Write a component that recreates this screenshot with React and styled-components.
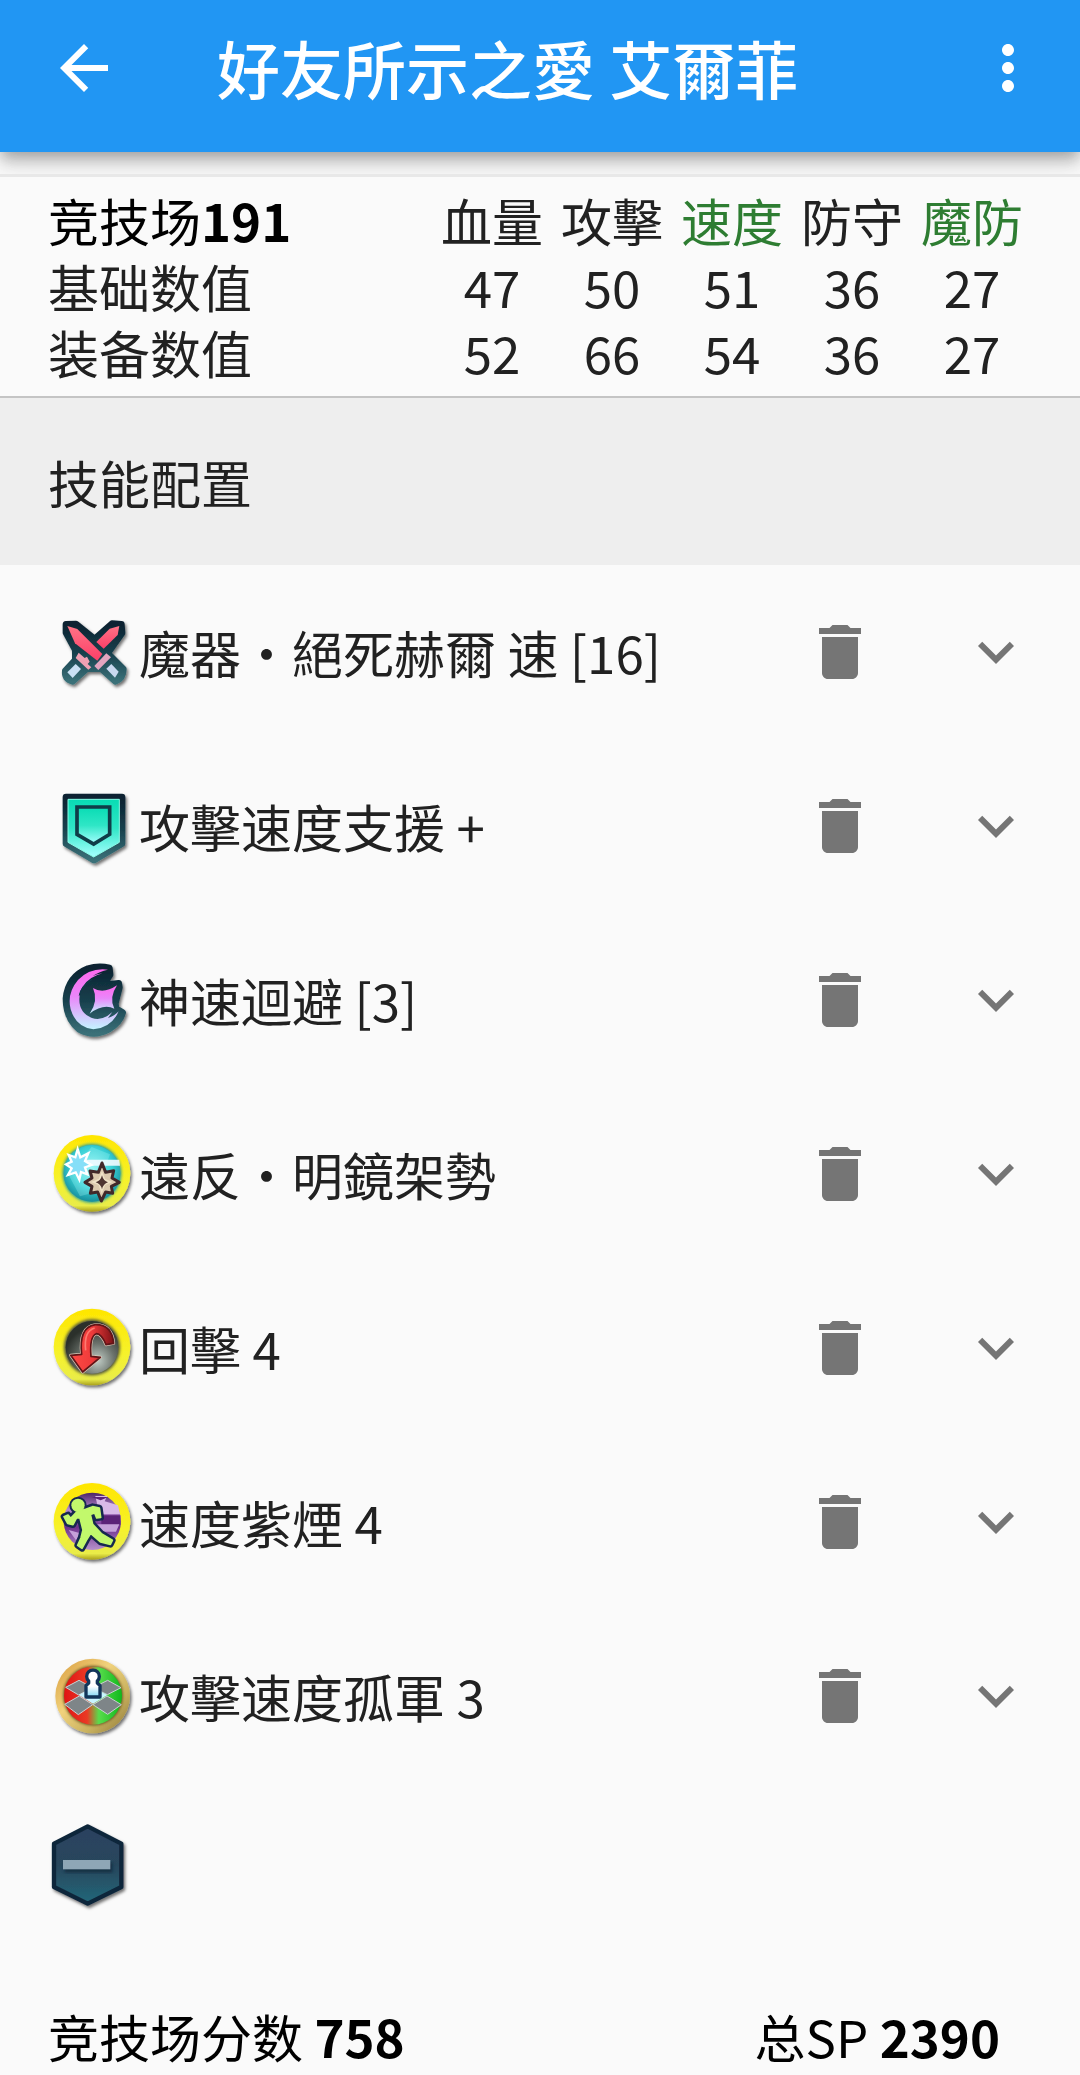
import React, { useState } from 'react';
import styled, { createGlobalStyle } from 'styled-components';
import {
  MdArrowBack,
  MdDelete,
  MdExpandMore,
  MdMoreVert,
} from 'react-icons/md';

const GlobalStyle = createGlobalStyle`
  * {
    box-sizing: border-box;
  }

  body {
    margin: 0;
    background: #fafafa;
    color: #212121;
    font-family: 'Noto Sans CJK SC', 'Noto Sans CJK TC', sans-serif;
    font-size: 51px;
    line-height: 66px;
  }
`;

const Page = styled.div`
  min-height: 100vh;
  overflow: hidden;
`;

const AppBar = styled.header`
  display: flex;
  align-items: center;
  height: 152px;
  padding: 0 36px 16px 48px;
  background: #2196f3;
  color: #fff;
  box-shadow: 0 6px 12px -3px rgba(0, 0, 0, 0.2),
    0 12px 15px rgba(0, 0, 0, 0.14), 0 3px 30px rgba(0, 0, 0, 0.12);
`;

const IconButton = styled.button`
  display: flex;
  flex: none;
  align-items: center;
  justify-content: center;
  width: ${props => props.$width || 72}px;
  height: 72px;
  padding: 0;
  border: 0;
  background: none;
  color: ${props => props.$color || '#757575'};
  font-size: 72px;
  line-height: 1;
  cursor: pointer;
`;

const Title = styled.h1`
  flex: 1;
  margin: 0;
  padding: 0 0 2px 97px;
  font-size: 63px;
  font-weight: 500;
  line-height: 88px;
  white-space: nowrap;
`;

const StatsPanel = styled.section`
  position: relative;
  margin-top: 22px;
  padding: 10px 48px 11px;
  border-top: 3px solid #e8e8e8;
  border-bottom: 2px solid #c4c4c4;
  background: #fafafa;
`;

const StatsTable = styled.table`
  width: 100%;
  border-collapse: collapse;
  table-layout: fixed;

  & th,
  & td {
    width: 120px;
    padding: 0;
    font-weight: 400;
    text-align: center;
    white-space: nowrap;
  }

  & th:first-child {
    width: auto;
    text-align: left;
  }
`;

const StatName = styled.span`
  color: ${props => (props.$boost ? '#2e7d32' : 'inherit')};
`;

const Score = styled.span`
  color: #000;
`;

const SectionTitle = styled.h2`
  margin: 0;
  padding: 51px 48px 50px;
  background: #eee;
  font-size: 51px;
  font-weight: 400;
`;

const SkillList = styled.ul`
  margin: 0;
  padding: 0;
  list-style: none;
`;

const SkillRow = styled.li`
  display: flex;
  align-items: center;
  height: 174px;
  padding: 0 48px;
`;

const SkillIcon = styled.svg`
  display: block;
  flex: none;
  width: 90px;
  height: 90px;
  overflow: visible;
`;

const SkillName = styled.span`
  flex: 1;
  min-width: 0;
  padding-left: 1px;
  white-space: nowrap;
`;

const Actions = styled.div`
  display: flex;
  align-items: center;
  gap: 48px;
`;

const EmptySlot = styled.button`
  display: block;
  margin: 38px 48px 0;
  padding: 0;
  border: 0;
  background: none;
  cursor: pointer;
`;

const Summary = styled.footer`
  display: flex;
  justify-content: space-between;
  padding: 92px 80px 6px 48px;
  color: #000;
  white-space: nowrap;
`;

function Defs() {
  return (
    <svg width="0" height="0" style={{ display: 'block' }} aria-hidden="true">
      <defs>
        <filter id="drop" x="-20%" y="-20%" width="150%" height="150%">
          <feDropShadow dx="5" dy="7" stdDeviation="5" floodOpacity="0.55" />
        </filter>
        <linearGradient id="rimDark" x1="0" y1="0" x2="0" y2="1">
          <stop offset="0" stopColor="#0b2230" />
          <stop offset="0.5" stopColor="#173f4c" />
          <stop offset="1" stopColor="#3a7078" />
        </linearGradient>
        <linearGradient id="blade" x1="0" y1="0" x2="0" y2="1">
          <stop offset="0" stopColor="#ff7386" />
          <stop offset="1" stopColor="#fb3f68" />
        </linearGradient>
        <linearGradient id="shield" x1="0" y1="0" x2="0" y2="1">
          <stop offset="0" stopColor="#08dcb4" />
          <stop offset="0.5" stopColor="#2fe6c6" />
          <stop offset="1" stopColor="#a6ffff" />
        </linearGradient>
        <linearGradient id="moon" x1="0" y1="0" x2="0" y2="1">
          <stop offset="0" stopColor="#ff69ee" />
          <stop offset="0.45" stopColor="#ea86fa" />
          <stop offset="1" stopColor="#c3f4ff" />
        </linearGradient>
        <linearGradient id="yellow" x1="0" y1="0" x2="0" y2="1">
          <stop offset="0" stopColor="#ffe600" />
          <stop offset="0.6" stopColor="#f6f22c" />
          <stop offset="0.92" stopColor="#e9ec48" />
          <stop offset="1" stopColor="#a8a01c" />
        </linearGradient>
        <linearGradient id="gold" x1="0" y1="0" x2="1" y2="1">
          <stop offset="0" stopColor="#d89a3c" />
          <stop offset="0.4" stopColor="#f1d27c" />
          <stop offset="0.7" stopColor="#c9b260" />
          <stop offset="1" stopColor="#8b7435" />
        </linearGradient>
        <radialGradient id="aqua" cx="0.5" cy="0.4" r="0.6">
          <stop offset="0" stopColor="#8ff2f2" />
          <stop offset="0.6" stopColor="#37cfd4" />
          <stop offset="1" stopColor="#178e9c" />
        </radialGradient>
        <radialGradient id="smoke" cx="0.6" cy="0.75" r="0.65">
          <stop offset="0" stopColor="#c2cec7" />
          <stop offset="0.5" stopColor="#6b726c" />
          <stop offset="1" stopColor="#2b302b" />
        </radialGradient>
        <linearGradient id="arrow" x1="0" y1="0" x2="1" y2="0">
          <stop offset="0" stopColor="#ff4a44" />
          <stop offset="0.5" stopColor="#ee3b3b" />
          <stop offset="1" stopColor="#7d1216" />
        </linearGradient>
        <linearGradient id="violet" x1="0" y1="0" x2="0" y2="1">
          <stop offset="0" stopColor="#4b2468" />
          <stop offset="0.3" stopColor="#b98bd0" />
          <stop offset="0.6" stopColor="#6d2f8c" />
          <stop offset="1" stopColor="#b792cc" />
        </linearGradient>
        <linearGradient id="redGreen" x1="0" y1="0" x2="1" y2="0">
          <stop offset="0" stopColor="#e01313" />
          <stop offset="0.4" stopColor="#ea3a25" />
          <stop offset="0.6" stopColor="#58dc4c" />
          <stop offset="1" stopColor="#10b81c" />
        </linearGradient>
        <linearGradient id="pawn" x1="0" y1="0" x2="0" y2="1">
          <stop offset="0" stopColor="#fff" />
          <stop offset="0.6" stopColor="#fff" />
          <stop offset="1" stopColor="#7fd6f6" />
        </linearGradient>
        <linearGradient id="hexagon" x1="0" y1="0" x2="0" y2="1">
          <stop offset="0" stopColor="#2b4260" />
          <stop offset="0.5" stopColor="#28465c" />
          <stop offset="1" stopColor="#22687a" />
        </linearGradient>
        <filter id="soft">
          <feGaussianBlur stdDeviation="4" />
        </filter>
      </defs>
    </svg>
  );
}

function SwordsIcon() {
  return (
    <SkillIcon viewBox="24 21 270 270" aria-hidden="true">
      <path
        d="M78 73 L108 72 L164 117 L216 71 L244 73 L246 99 L203 160 L250 207 Q250 236 226 244 L184 206 L140 206 L98 244 Q73 237 76 212 L106 180 L106 150 L78 98 Z"
        fill="url(#rimDark)"
        stroke="url(#rimDark)"
        strokeWidth="20"
        strokeLinejoin="round"
        filter="url(#drop)"
      />
      <path d="M209 86 L238 78 L233 105 L191 146 L169 126 Z" fill="url(#blade)" />
      <path d="M82 78 L112 87 L187 162 L172 182 L105 130 Z" fill="url(#blade)" />
      <path
        d="M116 158 L134 174 L141 170 L149 185 L143 192 L154 202 L145 209 L107 174 Z"
        fill="#f0a0b3"
      />
      <path d="M199 160 L213 172 L175 210 L163 198 Z" fill="#e3a5c0" />
      <path d="M107 192 L123 207 L98 234 L82 217 Z" fill="#c9e0f4" />
      <path d="M214 192 L236 215 L225 233 L199 206 Z" fill="#c9d8f0" />
    </SkillIcon>
  );
}

function ShieldIcon() {
  return (
    <SkillIcon viewBox="24 18 270 270" aria-hidden="true">
      <path
        d="M78 66 H246 V206 L162 255 L78 206 Z"
        fill="url(#rimDark)"
        stroke="url(#rimDark)"
        strokeWidth="20"
        strokeLinejoin="round"
        filter="url(#drop)"
      />
      <path
        d="M84 73 H238 V202 L161 246 L84 202 Z"
        fill="url(#shield)"
        stroke="#8afbe6"
        strokeWidth="3"
      />
      <path
        d="M111 96 H209 V178 L161 207 L111 178 Z"
        fill="url(#shield)"
        stroke="#0f3d48"
        strokeWidth="11"
      />
    </SkillIcon>
  );
}

function MoonIcon() {
  return (
    <SkillIcon viewBox="24 15 270 270" aria-hidden="true">
      <path
        d="M208 54 Q176 46 144 56 Q84 80 78 146 Q78 206 118 238 Q160 262 206 238 Q240 218 248 188 L228 176 L226 160 L238 112 L236 100 L204 104 L200 90 L210 74 Z"
        fill="url(#rimDark)"
        stroke="url(#rimDark)"
        strokeWidth="20"
        strokeLinejoin="round"
        filter="url(#drop)"
      />
      <path
        d="M204 59 Q150 52 114 90 Q80 130 92 178 Q108 232 160 238 Q214 234 236 184 Q224 198 204 204 L217 186 Q188 214 156 204 Q118 190 118 148 Q118 124 130 108 Q148 80 188 70 Q172 72 158 78 Q178 64 204 59 Z"
        fill="url(#moon)"
      />
      <path
        d="M118 136 Q122 108 156 88 Q132 104 118 136 Z"
        fill="#123848"
        stroke="#123848"
        strokeWidth="3"
      />
      <path
        d="M159 114 Q190 134 231 106 Q206 144 223 176 Q190 160 149 191 Q176 152 159 114 Z"
        fill="url(#moon)"
      />
    </SkillIcon>
  );
}

function MirrorIcon() {
  return (
    <SkillIcon viewBox="24 12 270 270" aria-hidden="true">
      <circle cx="156" cy="145" r="115" fill="url(#yellow)" filter="url(#drop)" />
      <circle cx="156" cy="145" r="88" fill="#1a98a4" filter="url(#soft)" />
      <circle cx="156" cy="145" r="85" fill="url(#aqua)" />
      <path d="M84 146 L155 66 L210 88 L170 200 L120 214 Z" fill="#b6ffff" opacity="0.25" />
      <path d="M118 104 H238 L240 122 H130 Z" fill="#f2fbff" opacity="0.9" />
      <path
        d="M113 72 L121 97 L145 85 L135 108 L154 120 L135 127 L142 148 L123 141 L118 164 L107 142 L84 150 L95 130 L78 118 L95 110 L86 90 L106 97 Z"
        fill="#86dff8"
        stroke="#fff"
        strokeWidth="7"
      />
      <path
        d="M186 114 L197 142 L221 137 L216 159 L238 172 L214 184 L218 205 L197 201 L184 228 L173 201 L151 205 L156 184 L135 172 L156 159 L150 138 L175 142 Z"
        fill="#dcc9ae"
        stroke="#42282a"
        strokeWidth="9"
        strokeLinejoin="round"
      />
      <path
        d="M186 138 L195 162 L218 171 L195 180 L185 206 L176 180 L153 171 L176 162 Z"
        fill="#f0e2c8"
      />
      <path d="M186 151 Q190 168 204 172 Q190 176 186 193 Q182 176 167 172 Q182 168 186 151 Z" fill="#4e3431" />
    </SkillIcon>
  );
}

function CounterIcon() {
  return (
    <SkillIcon viewBox="24 24 270 270" aria-hidden="true">
      <circle cx="156" cy="156" r="115" fill="url(#yellow)" filter="url(#drop)" />
      <circle cx="156" cy="157" r="84" fill="#4b5040" filter="url(#soft)" />
      <circle cx="156" cy="157" r="79" fill="url(#smoke)" />
      <path
        d="M125 178 Q116 96 166 89 Q216 88 221 145 L198 149 Q185 117 169 116 Q148 124 153 184 L181 187 L128 231 L92 181 Z"
        fill="url(#arrow)"
        stroke="#d8c9b8"
        strokeWidth="9"
        strokeLinejoin="round"
      />
      <path
        d="M125 178 Q116 96 166 89 Q216 88 221 145 L198 149 Q185 117 169 116 Q148 124 153 184 L181 187 L128 231 L92 181 Z"
        fill="url(#arrow)"
        stroke="#611517"
        strokeWidth="5"
        strokeLinejoin="round"
      />
      <path d="M137 166 Q131 108 164 99" fill="none" stroke="#ff7a70" strokeWidth="5" />
    </SkillIcon>
  );
}

function RunnerIcon() {
  const body =
    'M110 126 L139 117 L158 110 L178 114 L182 142 L170 144 L164 129 L151 133 L158 163 L184 191 L217 211 L211 223 L182 216 L152 190 L139 211 L126 235 L113 226 L123 204 L129 180 L120 144 L110 143 L99 164 L83 160 L72 140 L84 135 L92 145 Z';
  return (
    <SkillIcon viewBox="24 21 270 270" aria-hidden="true">
      <circle cx="156" cy="154" r="115" fill="url(#yellow)" filter="url(#drop)" />
      <circle cx="157" cy="154" r="86" fill="url(#violet)" />
      <path d="M166 78 H202 L194 94 L234 106 L240 132 H178 Z" fill="#d9b9e8" />
      <path d="M155 81 H205 L182 91 Z M184 136 H241 V164 H184 Z" fill="#5b2278" />
      <path d="M168 163 H238 L228 185 H184 Z M86 180 L121 190 L108 211 Z" fill="#c5a0d9" />
      <path d={body} fill="#c2f86c" stroke="#16284f" strokeWidth="20" strokeLinejoin="round" />
      <circle cx="114" cy="106" r="20" fill="#c2f86c" stroke="#16284f" strokeWidth="12" />
      <path d={body} fill="#c2f86c" stroke="#c2f86c" strokeWidth="5" strokeLinejoin="round" />
      <circle cx="114" cy="106" r="20" fill="#c2f86c" />
    </SkillIcon>
  );
}

function SoloIcon() {
  return (
    <SkillIcon viewBox="24 18 270 270" aria-hidden="true">
      <circle cx="158" cy="153" r="112" fill="url(#gold)" filter="url(#drop)" />
      <circle cx="159" cy="152" r="89" fill="#5b4a1c" filter="url(#soft)" />
      <circle cx="159" cy="152" r="87" fill="url(#redGreen)" />
      <g fill="#7e8588" stroke="#c8d0d2" strokeWidth="3" strokeLinejoin="round">
        <path d="M77 127 L117 106 L158 128 L116 150 Z" />
        <path d="M159 128 L203 106 L243 128 L202 149 Z" />
        <path d="M74 178 L118 153 L158 179 L115 209 Z" />
        <path d="M159 179 L201 153 L244 179 L203 208 Z" />
      </g>
      <path d="M116 150 L159 128 L202 150 L159 176 Z" fill="#c9f4ff" />
      <path
        d="M146 108 A19 19 0 1 1 172 108 L172 114 L180 122 V156 H138 V122 L146 114 Z"
        fill="url(#pawn)"
        stroke="#12355a"
        strokeWidth="10"
        strokeLinejoin="round"
      />
    </SkillIcon>
  );
}

function EmptyIcon() {
  return (
    <SkillIcon viewBox="24 33 270 270" aria-hidden="true">
      <path
        d="M143 49 L244 101 V231 L143 281 L42 231 V101 Z"
        fill="url(#hexagon)"
        stroke="#10263a"
        strokeWidth="13"
        strokeLinejoin="round"
        filter="url(#drop)"
      />
      <rect x="74" y="158" width="143" height="30" fill="#0e2638" opacity="0.7" filter="url(#soft)" />
      <rect x="69" y="150" width="142" height="28" fill="#8ea6b6" />
    </SkillIcon>
  );
}

const stats = [
  { name: '血量', base: 47, equipped: 52 },
  { name: '攻擊', base: 50, equipped: 66 },
  { name: '速度', base: 51, equipped: 54, boost: true },
  { name: '防守', base: 36, equipped: 36 },
  { name: '魔防', base: 27, equipped: 27, boost: true },
];

const initialSkills = [
  { id: 'weapon', name: '魔器・絕死赫爾 速 [16]', Icon: SwordsIcon },
  { id: 'assist', name: '攻擊速度支援 +', Icon: ShieldIcon },
  { id: 'special', name: '神速迴避 [3]', Icon: MoonIcon },
  { id: 'a', name: '遠反・明鏡架勢', Icon: MirrorIcon },
  { id: 'b', name: '回擊 4', Icon: CounterIcon },
  { id: 'c', name: '速度紫煙 4', Icon: RunnerIcon },
  { id: 's', name: '攻擊速度孤軍 3', Icon: SoloIcon },
];

function StatsSection() {
  return (
    <StatsPanel>
      <StatsTable>
        <thead>
          <tr>
            <th scope="col">
              <Score>
                竞技场<b>191</b>
              </Score>
            </th>
            {stats.map(stat => (
              <th scope="col" key={stat.name}>
                <StatName $boost={stat.boost}>{stat.name}</StatName>
              </th>
            ))}
          </tr>
        </thead>
        <tbody>
          <tr>
            <th scope="row">基础数值</th>
            {stats.map(stat => (
              <td key={stat.name}>{stat.base}</td>
            ))}
          </tr>
          <tr>
            <th scope="row">装备数值</th>
            {stats.map(stat => (
              <td key={stat.name}>{stat.equipped}</td>
            ))}
          </tr>
        </tbody>
      </StatsTable>
    </StatsPanel>
  );
}

function Skill({ skill, onDelete }) {
  const { Icon, name } = skill;
  return (
    <SkillRow>
      <Icon />
      <SkillName>{name}</SkillName>
      <Actions>
        <IconButton
          type="button"
          $width={144}
          aria-label={`删除 ${name}`}
          onClick={() => onDelete(skill.id)}
        >
          <MdDelete />
        </IconButton>
        <IconButton type="button" aria-label={`展开 ${name}`}>
          <MdExpandMore />
        </IconButton>
      </Actions>
    </SkillRow>
  );
}

export default function App() {
  const [skills, setSkills] = useState(initialSkills);

  function deleteSkill(id) {
    setSkills(skills.filter(skill => skill.id !== id));
  }

  return (
    <Page>
      <GlobalStyle />
      <Defs />
      <AppBar>
        <IconButton type="button" $color="#fff" aria-label="返回">
          <MdArrowBack />
        </IconButton>
        <Title>好友所示之愛 艾爾菲</Title>
        <IconButton type="button" $color="#fff" aria-label="更多">
          <MdMoreVert />
        </IconButton>
      </AppBar>

      <StatsSection />

      <SectionTitle>技能配置</SectionTitle>
      <SkillList>
        {skills.map(skill => (
          <Skill key={skill.id} skill={skill} onDelete={deleteSkill} />
        ))}
      </SkillList>
      <EmptySlot type="button" aria-label="圣印">
        <EmptyIcon />
      </EmptySlot>

      <Summary>
        <span>
          竞技场分数 <b>758</b>
        </span>
        <span>
          总SP <b>2390</b>
        </span>
      </Summary>
    </Page>
  );
}
